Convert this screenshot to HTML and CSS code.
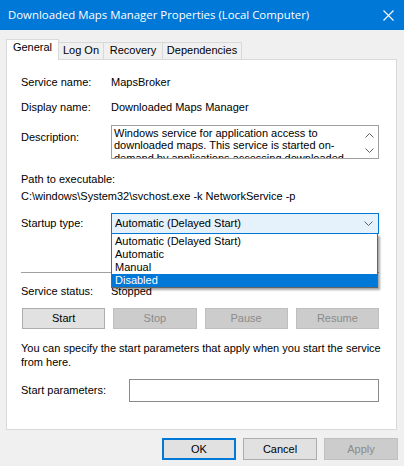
FILE: index.html
```html
<!DOCTYPE html>
<html>
<head>
<meta charset="utf-8">
<link rel="stylesheet" href="styles.css">
</head>
<body>
<div class="window">
  <div class="titlebar">
    <span class="title">Downloaded Maps Manager Properties (Local Computer)</span>
    <svg class="close" width="11" height="11" viewBox="0 0 11 11"><path d="M0.5 0.5L10.5 10.5M10.5 0.5L0.5 10.5" stroke="#fff" stroke-width="1.1" fill="none"/></svg>
  </div>
  <div class="tabs">
    <div class="tab active">General</div>
    <div class="tab t-logon">Log On</div>
    <div class="tab t-recovery">Recovery</div>
    <div class="tab t-deps">Dependencies</div>
  </div>
  <div class="panel">
    <div class="row r-name"><span class="label">Service name:</span><span>MapsBroker</span></div>
    <div class="row r-display"><span class="label">Display name:</span><span>Downloaded Maps Manager</span></div>
    <div class="row r-desc">
      <span class="label desc-label">Description:</span>
      <div class="desc">
        <div class="desc-text">Windows service for application access to downloaded maps. This service is started on-demand by applications accessing downloaded maps. Disabling this service will prevent apps from accessing maps.</div>
        <div class="scroll">
          <svg width="9" height="5" viewBox="0 0 9 5"><path d="M0.5 4.5L4.5 0.5L8.5 4.5" stroke="#606060" fill="none"/></svg>
          <svg width="9" height="5" viewBox="0 0 9 5"><path d="M0.5 0.5L4.5 4.5L8.5 0.5" stroke="#606060" fill="none"/></svg>
        </div>
      </div>
    </div>
    <div class="path-label">Path to executable:</div>
    <div class="path">C:\windows\System32\svchost.exe -k NetworkService -p</div>
    <div class="row r-startup">
      <span class="label">Startup type:</span>
      <div class="combo"><span>Automatic (Delayed Start)</span><svg width="9" height="5" viewBox="0 0 9 5"><path d="M0.5 0.5L4.5 4.5L8.5 0.5" stroke="#606060" fill="none"/></svg></div>
    </div>
    <div class="sep"></div>
    <div class="row r-status"><span class="label">Service status:</span><span>Stopped</span></div>
    <div class="svc-buttons">
      <button class="btn">Start</button>
      <button class="btn disabled">Stop</button>
      <button class="btn disabled">Pause</button>
      <button class="btn disabled">Resume</button>
    </div>
    <p class="hint">You can specify the start parameters that apply when you start the service from here.</p>
    <div class="row r-params"><span class="label">Start parameters:</span><div class="input"></div></div>
    <ul class="dropdown">
      <li>Automatic (Delayed Start)</li>
      <li>Automatic</li>
      <li>Manual</li>
      <li class="selected">Disabled</li>
    </ul>
  </div>
  <div class="footer">
    <button class="btn fbtn default">OK</button>
    <button class="btn fbtn">Cancel</button>
    <button class="btn fbtn disabled">Apply</button>
  </div>
</div>
</body>
</html>
```
FILE: styles.css
```css
html, body {
  margin: 0;
  padding: 0;
}
body {
  background: #f0f0f0;
  font-family: "Liberation Sans", Arial, sans-serif;
  font-size: 11px;
  line-height: 13px;
  color: #000;
}
.window {
  width: 404px;
  height: 466px;
  display: flex;
  flex-direction: column;
  overflow: hidden;
}
.titlebar {
  height: 30px;
  flex: none;
  background: #0078d7;
  color: #fff;
  display: flex;
  align-items: center;
  justify-content: space-between;
  padding: 0 10px 0 8px;
  box-sizing: border-box;
}
.title {
  font-family: "Open Sans", sans-serif;
  font-size: 11.4px;
  line-height: 16px;
}
.close {
  display: block;
}
.tabs {
  display: flex;
  align-items: flex-end;
  height: 21px;
  margin: 9px 0 -1px 6px;
  position: relative;
  z-index: 1;
  flex: none;
}
.tab {
  height: 17px;
  margin-bottom: 1px;
  box-sizing: border-box;
  border-top: 1px solid #d9d9d9;
  border-right: 1px solid #d9d9d9;
  background: #f0f0f0;
  text-align: center;
  padding-top: 1px;
}
.tab.active {
  height: 21px;
  margin-bottom: 0;
  width: 53px;
  background: #fff;
  border-left: 1px solid #d9d9d9;
  padding-top: 1px;
}
.t-logon { width: 45px; }
.t-recovery { width: 59px; }
.t-deps { width: 79px; }
.panel {
  position: relative;
  height: 371px;
  box-sizing: border-box;
  margin: 0 7px 0 6px;
  border: 1px solid #d9d9d9;
  background: #fff;
  padding: 0 17px 0 14px;
  flex: none;
}
.row {
  display: grid;
  grid-template-columns: 90px 1fr;
  align-items: center;
}
.r-name { margin-top: 16px; }
.r-display { margin-top: 12px; }
.r-desc {
  margin-top: 11px;
  align-items: start;
}
.desc-label { padding-top: 6px; }
.desc {
  height: 34px;
  box-sizing: border-box;
  border: 1px solid #a0a0a0;
  display: flex;
  overflow: hidden;
}
.desc-text {
  flex: 1;
  padding: 1px 0 0 2px;
  line-height: 12.3px;
  overflow: hidden;
}
.scroll {
  width: 17px;
  flex: none;
  display: flex;
  flex-direction: column;
  align-items: center;
  justify-content: space-between;
  padding: 7px 0 5px;
  box-sizing: border-box;
}
.scroll svg { display: block; }
.path-label { margin-top: 14px; }
.path { margin-top: 4px; }
.r-startup { margin-top: 10px; }
.combo {
  height: 21px;
  box-sizing: border-box;
  border: 1px solid #0078d7;
  background: #e5f1fb;
  display: flex;
  align-items: center;
  justify-content: space-between;
  padding: 0 5px 0 3px;
}
.combo svg { display: block; }
.sep {
  margin-top: 38px;
  height: 1px;
  background: #a0a0a0;
}
.r-status { margin-top: 12px; }
.svc-buttons {
  margin: 10px 0 0 1px;
  display: grid;
  grid-template-columns: repeat(4, 1fr);
  gap: 8px;
}
.btn {
  font-family: inherit;
  font-size: 11px;
  line-height: 13px;
  height: 21px;
  box-sizing: border-box;
  border: 1px solid #adadad;
  background: #e1e1e1;
  color: #000;
  padding: 0;
  margin: 0;
}
.btn.disabled {
  background: #cccccc;
  border-color: #bfbfbf;
  color: #8b8b8b;
}
.hint {
  margin: 12px -12px 0 0;
  line-height: 14px;
}
.r-params {
  margin-top: 10px;
  grid-template-columns: 108px 1fr;
}
.input {
  height: 23px;
  box-sizing: border-box;
  border: 1px solid #8a8a8a;
}
.dropdown {
  position: absolute;
  left: 104px;
  top: 174px;
  width: 267px;
  box-sizing: border-box;
  margin: 0;
  padding: 0;
  list-style: none;
  background: #fff;
  border: 1px solid #646464;
  border-top: none;
  box-shadow: 2px 2px 2px rgba(0, 0, 0, 0.35);
  padding-top: 1px;
}
.dropdown li {
  height: 13px;
  line-height: 13px;
  padding-left: 3px;
}
.dropdown li.selected {
  background: #0078d7;
  color: #fff;
}
.footer {
  display: flex;
  justify-content: flex-end;
  gap: 7px;
  margin-top: 8px;
  padding-right: 6px;
}
.fbtn {
  width: 74px;
  height: 22px;
}
.btn.default {
  border: 2px solid #0078d7;
}
```
